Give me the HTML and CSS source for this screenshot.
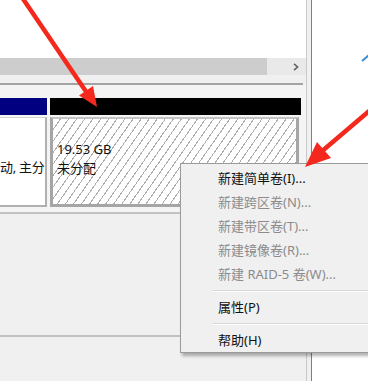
FILE: index.html
```html
<!DOCTYPE html>
<html lang="zh-CN">
<head>
    <meta charset="UTF-8">
    <title>磁盘管理</title>
    <link rel="stylesheet" href="styles.css">
</head>
<body>
    <div class="screen">
        <div class="console">
            <div class="volumes"></div>
            <div class="hscroll">
                <div class="thumb"></div>
                <div class="arrow-btn">
                    <svg width="6" height="8" viewBox="0 0 6 8"><path d="M1 0.8 L4.6 4 L1 7.2" fill="none" stroke="#606060" stroke-width="1.6"/></svg>
                </div>
            </div>
            <div class="splitter"></div>
            <div class="disks">
                <div class="disk-row">
                    <div class="part primary">
                        <div class="bar"></div>
                        <div class="box">
                            <div class="line">&nbsp;</div>
                            <div class="line">动, 主分</div>
                        </div>
                    </div>
                    <div class="part free">
                        <div class="bar"></div>
                        <div class="box">
                            <div class="line">19.53 GB</div>
                            <div class="line">未分配</div>
                        </div>
                    </div>
                </div>
                <div class="lower">
                    <div class="disk-slot"></div>
                </div>
            </div>
        </div>
        <div class="gutter"></div>
        <div class="actions"></div>

        <div class="menu">
            <div class="item">新建简单卷(I)...</div>
            <div class="item off">新建跨区卷(N)...</div>
            <div class="item off">新建带区卷(T)...</div>
            <div class="item off">新建镜像卷(R)...</div>
            <div class="item off">新建 RAID-5 卷(W)...</div>
            <div class="sep"></div>
            <div class="item">属性(P)</div>
            <div class="sep"></div>
            <div class="item">帮助(H)</div>
        </div>

        <svg class="marks" width="368" height="381" viewBox="0 0 368 381">
            <line x1="17" y1="-10" x2="87" y2="93" stroke="#f4281c" stroke-width="4.5"/>
            <polygon points="97,107 79,95.5 93,86" fill="#f4281c"/>
            <line x1="375" y1="106" x2="321" y2="152" stroke="#f4281c" stroke-width="4.5"/>
            <polygon points="305,167 317,142 331,158" fill="#f4281c"/>
            <line x1="362" y1="61" x2="369" y2="55" stroke="#3b8fd6" stroke-width="2"/>
        </svg>
    </div>
</body>
</html>
```

FILE: styles.css
```css
body {
    margin: 0;
    font-family: "Noto Sans", "Noto Sans CJK SC", sans-serif;
    font-size: 13px;
    background-color: #f0f0f0;
}
.screen {
    position: relative;
    width: 368px;
    height: 381px;
    display: flex;
    overflow: hidden;
}
.console {
    width: 306px;
    border-right: 1px solid #c9c9c9;
    display: flex;
    flex-direction: column;
}
.volumes {
    height: 58px;
    background-color: white;
}
.hscroll {
    height: 17px;
    display: flex;
    background-color: #e9e9e9;
}
.hscroll .thumb {
    width: 267px;
    background-color: #cdcdcd;
}
.hscroll .arrow-btn {
    flex: 1;
    display: flex;
    align-items: center;
    justify-content: center;
    padding-left: 19px;
}
.splitter {
    height: 8px;
    background-color: #f0f0f0;
    border-bottom: 2px solid #a3a3a3;
    margin-right: 3px;
}
.disks {
    flex: 1;
    padding-top: 13px;
    display: flex;
    flex-direction: column;
    background-color: #f4f4f4;
}
.disk-row {
    display: flex;
    gap: 3px;
}
.part .bar {
    height: 17px;
}
.part .box {
    margin-top: 2px;
    height: 90px;
    box-sizing: border-box;
    padding: 21px 0 0 4px;
    line-height: 19px;
    white-space: nowrap;
    color: #111;
}
.primary {
    width: 47px;
}
.primary .bar {
    background-color: #000080;
}
.primary .box {
    background-color: white;
    border-top: 1px solid #d4d4d4;
    border-right: 2px solid #b0b0b0;
    border-bottom: 2px solid #b0b0b0;
    padding-left: 0;
    letter-spacing: -0.3px;
}
.free {
    width: 251px;
}
.free .bar {
    background-color: black;
}
.free .box {
    width: 249px;
    overflow: hidden;
    border: 3px solid #a5a5a5;
    border-top: 2px solid #c4c4c4;
    background: repeating-linear-gradient(125deg, white 0 5.6px, #adadad 5.6px 6.6px);
}
.lower {
    flex: 1;
    margin-top: 5px;
    border-top: 2px solid #c2c2c2;
    background-color: #f0f0f0;
}
.disk-slot {
    height: 121px;
    border-bottom: 2px solid #c2c2c2;
}
.gutter {
    width: 4px;
    background-color: #f0f0f0;
}
.actions {
    flex: 1;
    border-left: 1px solid #808080;
    background-color: white;
}
.menu {
    position: absolute;
    left: 180px;
    top: 163px;
    width: 210px;
    padding-top: 2px;
    background-color: #f0f0f0;
    border: 1px solid #9a9a9a;
    box-shadow: 2px 3px 3px rgba(0, 0, 0, 0.3);
}
.menu .item {
    height: 24px;
    line-height: 24px;
    padding-left: 37px;
    color: #111;
}
.menu .item.off {
    color: #8b8b8b;
}
.menu .sep {
    height: 1px;
    margin: 4px 0 3px 32px;
    background-color: #d7d7d7;
    border-bottom: 1px solid white;
}
.marks {
    position: absolute;
    left: 0;
    top: 0;
    pointer-events: none;
}
```
